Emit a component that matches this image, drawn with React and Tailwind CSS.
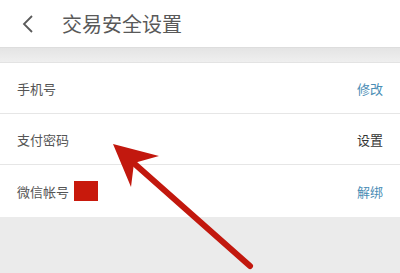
import React from "react";

const font = { fontFamily: '"Noto Sans CJK SC", "Noto Sans", sans-serif' };

const Row = ({ label, action, actionClass, extra, last }) => (
  <div
    className={`flex items-center justify-between pl-[17px] pr-[17px] ${
      last ? "h-[52px]" : "h-[51px] border-b border-[#e6e6e6]"
    }`}
  >
    <div className="flex items-center gap-[5px]">
      <span className="text-[13px] leading-none text-[#555555]">{label}</span>
      {extra}
    </div>
    <span className={`text-[13px] leading-none ${actionClass}`}>{action}</span>
  </div>
);

export default function App() {
  return (
    <div className="relative h-[273px] w-[400px] overflow-hidden bg-[#ebebeb]" style={font}>
      {/* Header */}
      <div className="flex h-[47px] items-center bg-white">
        <svg width="14" height="18" viewBox="0 0 14 18" className="ml-[21px]">
          <path d="M11 1 L3 9 L11 17" fill="none" stroke="#5a5a5a" strokeWidth="1.8" />
        </svg>
        <span className="ml-[27px] text-[20px] leading-none text-[#595959]">交易安全设置</span>
      </div>
      <div className="h-[15px] border-t border-[#dddddd] bg-gradient-to-b from-[#e4e4e4] to-[#efefef]" />

      {/* Rows */}
      <div className="bg-white border-t border-[#e3e3e3]">
        <Row label="手机号" action="修改" actionClass="text-[#4a8db5]" />
        <Row label="支付密码" action="设置" actionClass="text-[#333333]" />
        <Row
          label="微信帐号"
          action="解绑"
          actionClass="text-[#4a8db5]"
          last
          extra={<span className="block h-[20px] w-[24px] bg-[#c8190c]" />}
        />
      </div>

      {/* Annotation arrow */}
      <svg className="pointer-events-none absolute left-0 top-0" width="400" height="273">
        <line x1="250" y1="266" x2="128" y2="158" stroke="#c2180e" strokeWidth="6" strokeLinecap="round" />
        <polygon points="113,144 159,156 134,163 131,187" fill="#c2180e" />
      </svg>
    </div>
  );
}
